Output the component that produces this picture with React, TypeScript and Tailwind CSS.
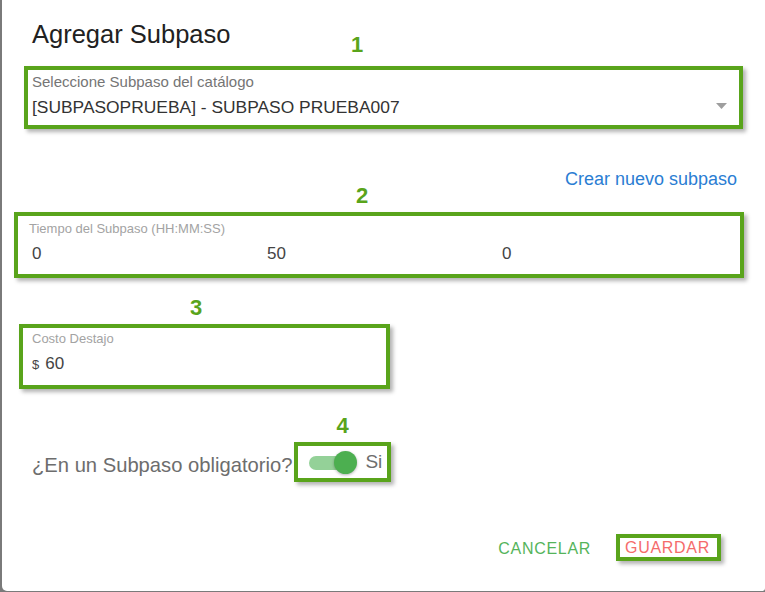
export default function App() {
  const font = { fontFamily: '"Liberation Sans", Arial, sans-serif' };

  return (
    <div className="w-[765px] h-[592px] bg-[#7a7a7a] flex" style={font}>
      <div className="ml-[2px] w-[763px] h-[591px] bg-white rounded-bl-[5px] rounded-br-[3px] flex flex-col pt-[19px]">
        {/* title */}
        <h2 className="ml-[30px] text-[25.5px] leading-[30px] text-[#212121]">Agregar Subpaso</h2>

        {/* 1: subpaso select */}
        <div className="relative mt-[17px] ml-[22px] w-[719px] border-[4px] border-[#59a41b] shadow-[3px_3px_4px_rgba(0,0,0,0.3)] pl-[4px] pt-[3px] pb-[8px]">
          <span className="absolute top-[-36px] left-[323px] text-[22px] leading-[22px] font-bold text-[#59a41b]">1</span>
          <div className="text-[15px] leading-[17px] text-[#757575]">Seleccione Subpaso del catálogo</div>
          <div className="mt-[7px] text-[17.4px] leading-[20px] text-[#333333]">[SUBPASOPRUEBA] - SUBPASO PRUEBA007</div>
          <svg className="absolute right-[12px] top-[33px]" width="11" height="6" viewBox="0 0 11 6">
            <polygon points="0,0 11,0 5.5,6" fill="#9e9e9e" />
          </svg>
        </div>

        <div className="mt-[39px] ml-[22px] w-[713px] flex justify-end">
          <span className="text-[18px] leading-[22px] text-[#2a7dd3]">Crear nuevo subpaso</span>
        </div>

        {/* 2: tiempo */}
        <div className="relative mt-[22px] ml-[12px] w-[730px] border-[4px] border-[#59a41b] shadow-[3px_3px_4px_rgba(0,0,0,0.3)] pl-[11px] pt-[5px] pb-[10px]">
          <span className="absolute top-[-31px] left-[338px] text-[22px] leading-[22px] font-bold text-[#59a41b]">2</span>
          <div className="text-[13px] leading-[15px] text-[#a3a3a3]">Tiempo del Subpaso (HH:MM:SS)</div>
          <div className="mt-[8px] ml-[3px] grid grid-cols-[235px_235px_1fr] text-[17px] leading-[20px] text-[#444444]">
            <span>0</span>
            <span>50</span>
            <span>0</span>
          </div>
        </div>

        {/* 3: costo */}
        <div className="relative mt-[46px] ml-[17px] w-[371px] border-[4px] border-[#59a41b] shadow-[3px_3px_4px_rgba(0,0,0,0.3)] pl-[9px] pt-[3px] pb-[10px]">
          <span className="absolute top-[-31px] left-[167px] text-[22px] leading-[22px] font-bold text-[#59a41b]">3</span>
          <div className="text-[13px] leading-[15px] text-[#a3a3a3]">Costo Destajo</div>
          <div className="mt-[8px] leading-[20px] text-[#444444] flex items-baseline">
            <span className="text-[13px] mr-[6px]">$</span>
            <span className="text-[17px]">60</span>
          </div>
        </div>

        {/* 4: obligatorio */}
        <div className="mt-[53px] ml-[30px] flex items-start">
          <span className="mt-[11px] text-[20.2px] leading-[24px] text-[#6d6d6d]">¿En un Subpaso obligatorio?</span>
          <div className="relative ml-[2px] h-[40px] border-[4px] border-[#59a41b] shadow-[3px_3px_4px_rgba(0,0,0,0.3)] flex items-center pl-[11px] pr-[5px] gap-[8px]">
            <span className="absolute top-[-31px] left-[38px] text-[22px] leading-[22px] font-bold text-[#59a41b]">4</span>
            <div className="relative w-[48px] h-[23px]">
              <div className="absolute left-0 top-[5px] w-[41px] h-[14px] rounded-full bg-[#94d198]" />
              <div className="absolute right-0 top-0 w-[23px] h-[23px] rounded-full bg-[#4caf50] shadow-[0_1px_3px_rgba(0,0,0,0.3)]" />
            </div>
            <span className="text-[19px] leading-[22px] text-[#6d6d6d]">Si</span>
          </div>
        </div>

        {/* actions */}
        <div className="mt-[52px] pr-[44px] flex justify-end items-start">
          <button className="mt-[6px] mr-[25px] text-[16px] leading-[17px] tracking-[0.7px] text-[#55b45b]">CANCELAR</button>
          <div className="border-[4px] border-[#59a41b] shadow-[3px_3px_4px_rgba(0,0,0,0.3)] pl-[5px] pr-[7px] pt-[2px] pb-[1px]">
            <button className="block text-[16px] leading-[16px] tracking-[0.7px] text-[#f56b6b]">GUARDAR</button>
          </div>
        </div>
      </div>
    </div>
  );
}
